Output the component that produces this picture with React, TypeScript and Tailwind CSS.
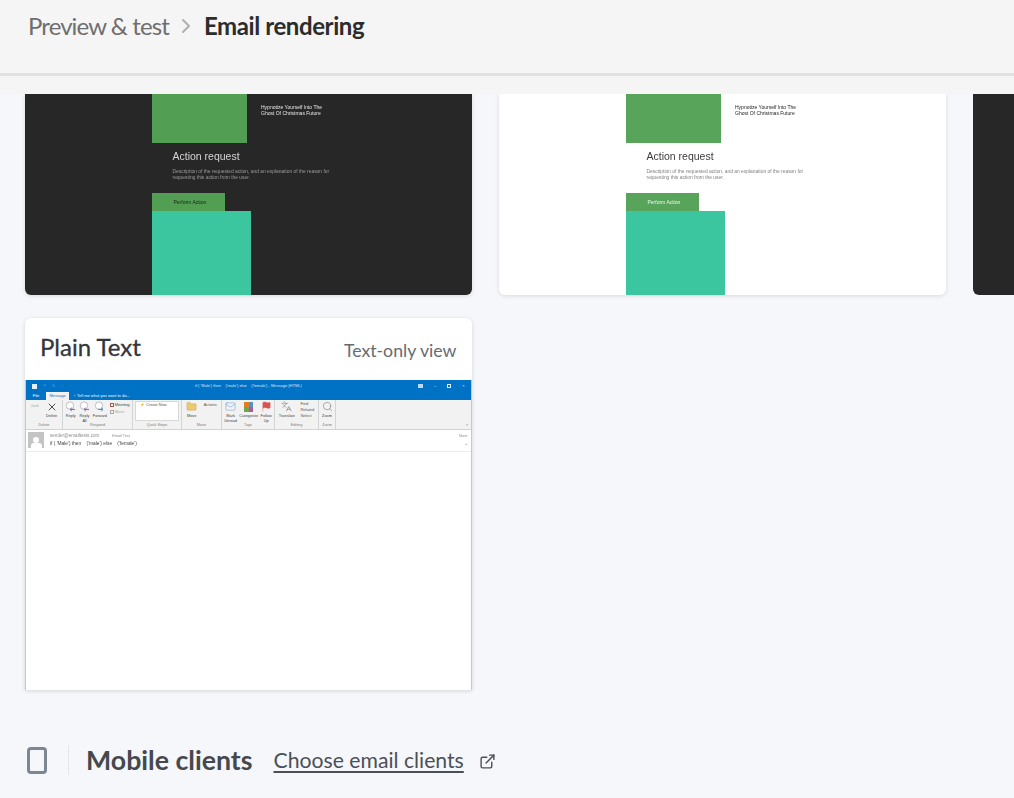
import { ChevronRight, ExternalLink, Search, Flag, X, Folder, Mail, Languages } from 'lucide-react'

const sans = "font-['Lato','Liberation_Sans',sans-serif]"

function EmailPreview({ dark }: { dark?: boolean }) {
  return (
    <div
      className={`w-[446.5px] h-[201px] shrink-0 rounded-b-md shadow-[0_1px_4px_rgba(0,0,0,0.12)] overflow-hidden font-['Liberation_Sans',sans-serif] ${
        dark ? 'bg-[#272727]' : 'bg-white'
      }`}
    >
      <div className="blur-[0.25px]">
        <div className="ml-[127px] flex">
          <div className={`w-[95px] h-[49px] ${dark ? 'bg-[#529f54]' : 'bg-[#58a45a]'}`} />
          <div className={`ml-[14px] mt-[10px] text-[5px] leading-[6px] ${dark ? 'text-[#e6e6e6]' : 'text-[#222]'}`}>
            <div>Hypnotize Yourself Into The</div>
            <div>Ghost Of Christmas Future</div>
          </div>
        </div>
        <div className="ml-[147.5px] mt-[7px]">
          <div className={`text-[10.5px] leading-[13px] ${dark ? 'text-[#d4d4d4]' : 'text-[#3d3d3d]'}`}>Action request</div>
          <div className={`mt-[6px] text-[4.9px] leading-[6px] ${dark ? 'text-[#9a9a9a]' : 'text-[#808080]'}`}>
            <div>Description of the requested action, and an explanation of the reason for</div>
            <div>requesting this action from the user.</div>
          </div>
        </div>
        <div className="ml-[127px] mt-[12px]">
          <div
            className={`w-[73px] h-[18px] pl-[21.5px] pt-[1px] flex items-center text-[5px] ${
              dark ? 'bg-[#529f54] text-[#222]' : 'bg-[#58a45a] text-[#eef7ee]'
            }`}
          >
            Perform Action
          </div>
          <div className="w-[99px] h-[84px] bg-[#3cc6a0]" />
        </div>
      </div>
    </div>
  )
}

function RibbonGroup({ width, label, children }: { width: number; label: string; children: React.ReactNode }) {
  return (
    <div style={{ width }} className="h-full shrink-0 border-r border-[#d4d4d4] flex flex-col">
      <div className="flex-1 flex items-start justify-around px-[1px] pt-[1px]">{children}</div>
      <div className="h-[6px] text-center text-[3.8px] leading-[5px] text-[#7d7d7d]">{label}</div>
    </div>
  )
}

function RibbonBtn({ icon, label }: { icon: React.ReactNode; label: string }) {
  return (
    <div className="flex flex-col items-center text-[3.9px] leading-[4.5px] text-[#444]">
      <span className="h-[11px] flex items-center">{icon}</span>
      <span className="mt-[2px] text-center whitespace-pre-line">{label}</span>
    </div>
  )
}

// round envelope with a coloured arrow, as on the Reply / Forward buttons
function MailArrow({ color, flip }: { color: string; flip?: boolean }) {
  return (
    <svg width="11" height="11" viewBox="0 0 11 11" fill="none">
      <circle cx="5" cy="4.6" r="3.7" fill="#fff" stroke="#9a9aa4" strokeWidth="0.6" />
      <path d={flip ? 'M4 8.4h5M7.2 6.8l1.8 1.6-1.8 1.6' : 'M10 8.4H5M6.8 6.8L5 8.4l1.8 1.6'} stroke={color} strokeWidth="1" />
    </svg>
  )
}

function OutlookShot() {
  return (
    <div className="h-[310px] border-x border-[#b2cfe2] bg-white font-['Liberation_Sans',sans-serif]">
      <div className="blur-[0.25px]">
        <div className="h-[20px] bg-[#0072c6]">
          <div className="h-[12px] flex items-center pl-[6px] text-[4px] text-[#d5e8f6]">
            <div className="flex items-center gap-[6px] w-[163px]">
              <span className="w-[5px] h-[5px] bg-[#e4f0fa]" />
              <span className="text-[#5fa6dc]">↶</span>
              <span className="text-[#5fa6dc]">↻</span>
              <span className="text-[#5fa6dc]">↑</span>
              <span className="text-[#5fa6dc]">↓</span>
            </div>
            <div className="w-[223px] whitespace-pre">if ( 'Male') then    ('male') else    ('female') - Message (HTML)</div>
            <div className="flex items-center gap-[11px] text-[#e4f0fa]">
              <span className="w-[5px] h-[4px] bg-[#bcd9ef]" />
              <span>–</span>
              <span className="w-[4px] h-[4px] border-[0.5px] border-[#e4f0fa]" />
              <span>×</span>
            </div>
          </div>
          <div className="h-[8px] flex items-end text-[4px] text-white">
            <div className="w-[20px] h-[8px] text-center leading-[8px]">File</div>
            <div className="w-[23px] h-[8px] text-center leading-[8px] bg-[#f2f2f2] text-[#1f6eb0]">Message</div>
            <div className="ml-[4px] h-[8px] leading-[8px] text-[#eef6fc]">♀ Tell me what you want to do...</div>
          </div>
        </div>
        <div className="h-[30px] bg-[#f2f2f2] border-b border-[#d2d2d2] flex">
          <RibbonGroup width={37} label="Delete">
            <RibbonBtn icon={<span className="text-[4px] text-[#aaa]">Junk</span>} label="" />
            <RibbonBtn icon={<X size={12} strokeWidth={1.8} className="text-[#3a3a3a]" />} label="Delete" />
          </RibbonGroup>
          <RibbonGroup width={70} label="Respond">
            <RibbonBtn icon={<MailArrow color="#8a5fc0" />} label="Reply" />
            <RibbonBtn icon={<MailArrow color="#8a5fc0" />} label={'Reply\nAll'} />
            <RibbonBtn icon={<MailArrow color="#3f8bd6" flip />} label="Forward" />
            <div className="text-[4.2px] leading-[7px] text-[#444]">
              <div className="flex items-center gap-[1px]">
                <span className="w-[4px] h-[4px] border-[0.5px] border-[#a55]" />
                Meeting
              </div>
              <div className="flex items-center gap-[1px] text-[#aaa]">
                <span className="w-[4px] h-[4px] border-[0.5px] border-[#aaa]" />
                More
              </div>
            </div>
          </RibbonGroup>
          <RibbonGroup width={49} label="Quick Steps">
            <div className="w-[44px] h-[20px] bg-white border border-[#d8d8d8] pl-[4px] text-[3.9px] leading-[6px] text-[#555]">
              ⚡ Create New
            </div>
          </RibbonGroup>
          <RibbonGroup width={40} label="Move">
            <RibbonBtn icon={<Folder size={11} strokeWidth={1} className="text-[#c9a34a] fill-[#ecc873]" />} label="Move" />
            <div className="text-[4px] leading-[7px] text-[#555]">Actions</div>
          </RibbonGroup>
          <RibbonGroup width={53} label="Tags">
            <RibbonBtn icon={<Mail size={11} strokeWidth={1} className="text-[#4f8fd0]" />} label={'Mark\nUnread'} />
            <RibbonBtn
              icon={
                <span className="w-[9px] h-[10px] grid grid-cols-2">
                  <span className="bg-[#d9822b]" />
                  <span className="bg-[#5b8fc9]" />
                  <span className="bg-[#6ca84f]" />
                  <span className="bg-[#b05a9c]" />
                </span>
              }
              label="Categorize"
            />
            <RibbonBtn icon={<Flag size={11} strokeWidth={1} className="text-[#d9534f] fill-[#d9534f]" />} label={'Follow\nUp'} />
          </RibbonGroup>
          <RibbonGroup width={44} label="Editing">
            <RibbonBtn icon={<Languages size={11} strokeWidth={1} className="text-[#555]" />} label="Translate" />
            <div className="text-[4px] leading-[6px] text-[#555]">
              <div>Find</div>
              <div>Related</div>
              <div>Select</div>
            </div>
          </RibbonGroup>
          <RibbonGroup width={17} label="Zoom">
            <RibbonBtn icon={<Search size={11} strokeWidth={1} className="text-[#555]" />} label="Zoom" />
          </RibbonGroup>
          <div className="flex-1 flex items-end justify-end pr-[2px] text-[5px] leading-[6px] text-[#888]">⌃</div>
        </div>
        <div className="h-[22px] border-b border-[#ececec] flex pl-[2px] pr-[3px] pt-[2px]">
          <div className="w-[16px] h-[16px] bg-[#c4c4c4] flex flex-col items-center justify-end overflow-hidden">
            <span className="w-[6px] h-[6px] rounded-full bg-white" />
            <span className="w-[11px] h-[5px] rounded-t-[3px] bg-white" />
          </div>
          <div className="ml-[6px] flex-1">
            <div className="flex text-[4.6px] leading-[8px] text-[#8d8d8d]">
              <span>sender@emailtests.com</span>
              <span className="ml-[13px] text-[3.8px]">Email Test</span>
              <span className="ml-auto text-[3.6px]">None</span>
            </div>
            <div className="flex text-[4.8px] leading-[8px] text-[#444]">
              <span className="whitespace-pre">if ( 'Male') then    ('male') else    ('female')</span>
              <span className="ml-auto text-[#777]">⌄</span>
            </div>
          </div>
        </div>
      </div>
    </div>
  )
}

export default function App() {
  return (
    <div className={`h-[798px] w-[1014px] overflow-hidden flex flex-col bg-[#f5f7fb] ${sans}`}>
      <header className="h-[76px] shrink-0 bg-[#f5f5f5] border-b-[3px] border-[#e1e1e1] pl-[28px] pt-[11px] flex items-start text-[24px] leading-[30px]">
        <span className="text-[#6e6e6e] tracking-[-0.9px]">Preview &amp; test</span>
        <ChevronRight size={24} strokeWidth={2} className="ml-[5.5px] mr-[5.5px] mt-[3px] text-[#b0b0b0]" />
        <span className="font-bold text-[#2c2c2c] tracking-[-0.4px]">Email rendering</span>
      </header>
      <div className="h-[18px] shrink-0 bg-[#f5f5f5]" />

      <main className="flex-1 overflow-hidden pl-[25px]">
        <div className="flex gap-[27.5px]">
          <EmailPreview dark />
          <EmailPreview />
          <div className="w-[446.5px] h-[201px] shrink-0 rounded-b-md bg-[#272727]" />
        </div>

        <section className="mt-[23px] w-[446.5px] h-[372px] bg-white rounded-t-md shadow-[0_1px_4px_rgba(0,0,0,0.14)]">
          <div className="h-[62px] px-[15px] flex justify-between text-[#33363b]">
            <h2 className="mt-[14px] text-[24px] leading-[29px] [-webkit-text-stroke:0.3px]">Plain Text</h2>
            <span className="mt-[22px] text-[17.7px] leading-[22px] text-[#666b73]">Text-only view</span>
          </div>
          <OutlookShot />
        </section>

        <div className="mt-[54px] flex items-center -ml-[25px] pl-[27px] h-[32px]">
          <div className="w-[20px] h-[27px] rounded-[4px] border-[3px] border-[#7d8794]" />
          <div className="ml-[21px] w-px h-[30px] bg-[#e4e6ea]" />
          <h3 className="ml-[17px] text-[26.7px] leading-[32px] font-bold text-[#45494e]">Mobile clients</h3>
          <a className="ml-[21px] text-[21.2px] leading-[28px] text-[#4b5057] underline underline-offset-[3px]">Choose email clients</a>
          <ExternalLink size={17} strokeWidth={2} className="ml-[15px] mt-[2px] text-[#4b5057]" />
        </div>
      </main>
    </div>
  )
}
